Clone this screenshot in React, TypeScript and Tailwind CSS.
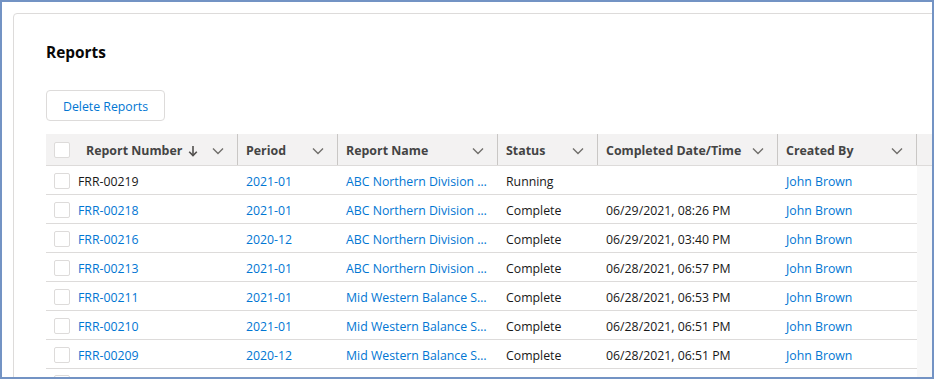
import React from "react";

const Chevron = () => (
  <svg width="12" height="8" viewBox="0 0 12 8" className="shrink-0">
    <polyline points="1,1.5 6,6.5 11,1.5" fill="none" stroke="#706e6b" strokeWidth="1.4" />
  </svg>
);

const SortArrow = () => (
  <svg width="10" height="12" viewBox="0 0 10 12" className="shrink-0">
    <line x1="5" y1="1" x2="5" y2="10.5" stroke="#514f4d" strokeWidth="1.6" />
    <polyline points="1.2,6.8 5,10.6 8.8,6.8" fill="none" stroke="#514f4d" strokeWidth="1.6" />
  </svg>
);

const Checkbox = () => (
  <div className="w-4 h-4 rounded-[2px] border border-[#dddbda] bg-white shrink-0" />
);

type Row = {
  num: string;
  numLink: boolean;
  period: string;
  name: string;
  status: string;
  date: string;
};

const rows: Row[] = [
  { num: "FRR-00219", numLink: false, period: "2021-01", name: "ABC Northern Division …", status: "Running", date: "" },
  { num: "FRR-00218", numLink: true, period: "2021-01", name: "ABC Northern Division …", status: "Complete", date: "06/29/2021, 08:26 PM" },
  { num: "FRR-00216", numLink: true, period: "2020-12", name: "ABC Northern Division …", status: "Complete", date: "06/29/2021, 03:40 PM" },
  { num: "FRR-00213", numLink: true, period: "2021-01", name: "ABC Northern Division …", status: "Complete", date: "06/28/2021, 06:57 PM" },
  { num: "FRR-00211", numLink: true, period: "2021-01", name: "Mid Western Balance S…", status: "Complete", date: "06/28/2021, 06:53 PM" },
  { num: "FRR-00210", numLink: true, period: "2021-01", name: "Mid Western Balance S…", status: "Complete", date: "06/28/2021, 06:51 PM" },
  { num: "FRR-00209", numLink: true, period: "2020-12", name: "Mid Western Balance S…", status: "Complete", date: "06/28/2021, 06:51 PM" },
];

const cols = "grid grid-cols-[32px_159px_100px_160px_100px_180px_140px] w-[871px]";

const HeaderCell = ({ label, first, sort }: { label: string; first?: boolean; sort?: boolean }) => (
  <div className={`flex items-center h-full pl-2 pr-[13px] ${first ? "" : "border-l border-[#c9c7c5]"}`}>
    <span className="font-bold text-[#444444] whitespace-nowrap text-[12.4px] leading-[18px] pt-[3px]">{label}</span>
    {sort && <span className="ml-[6px] flex items-center pt-[2px]"><SortArrow /></span>}
    <span className="ml-auto flex items-center pt-[2px]"><Chevron /></span>
  </div>
);

export default function App() {
  return (
    <div
      className="w-[934px] h-[379px] border-2 border-[#7393c4] bg-white overflow-hidden pl-[11px] pt-[11px] text-[12.3px] text-[#181818]"
      style={{ fontFamily: '"Open Sans", "Noto Sans", sans-serif' }}
    >
      <div className="w-[940px] h-[400px] border border-[#dddbda] rounded-tl-[4px] bg-white pl-[32px] pt-[29px]">
        <h2 className="text-[15.4px] leading-[20px] font-bold text-[#080707]">Reports</h2>
        <button className="mt-[27px] h-[31px] w-[119px] border border-[#dddbda] rounded-[4px] bg-white text-[#0176d3] text-[12.3px] leading-[18px] pt-[2px]">
          Delete Reports
        </button>
        <div className="mt-[13px] bg-[#f8f8f8]">
          <div className="flex bg-[#f3f2f2] border-b border-[#dddbda] h-[32px]">
            <div className={`${cols} h-[31px] items-center`}>
              <div className="flex items-center pl-2 h-full pt-[1px]"><Checkbox /></div>
              <HeaderCell label="Report Number" first sort />
              <HeaderCell label="Period" />
              <HeaderCell label="Report Name" />
              <HeaderCell label="Status" />
              <HeaderCell label="Completed Date/Time" />
              <div className="border-r border-[#c9c7c5] h-full">
                <HeaderCell label="Created By" />
              </div>
            </div>
          </div>
          {rows.map((r) => (
            <div key={r.num} className={`${cols} h-[29px] bg-white border-b border-[#dddbda] items-center leading-[18px]`}>
              <div className="flex items-center pl-2 pt-[1px]"><Checkbox /></div>
              <div className={`pt-[3px] ${r.numLink ? "text-[#0176d3]" : ""}`}>{r.num}</div>
              <div className="pt-[3px] pl-[9px] text-[#0176d3]">{r.period}</div>
              <div className="pt-[3px] pl-[9px] text-[#0176d3] whitespace-nowrap overflow-hidden">{r.name}</div>
              <div className="pt-[3px] pl-[9px]">{r.status}</div>
              <div className="pt-[3px] pl-[9px] whitespace-nowrap">{r.date}</div>
              <div className="pt-[3px] pl-[9px] text-[#0176d3]">John Brown</div>
            </div>
          ))}
          <div className={`${cols} h-[29px] bg-white items-start`}>
            <div className="flex pl-2 pt-[6px]"><Checkbox /></div>
          </div>
        </div>
      </div>
    </div>
  );
}
